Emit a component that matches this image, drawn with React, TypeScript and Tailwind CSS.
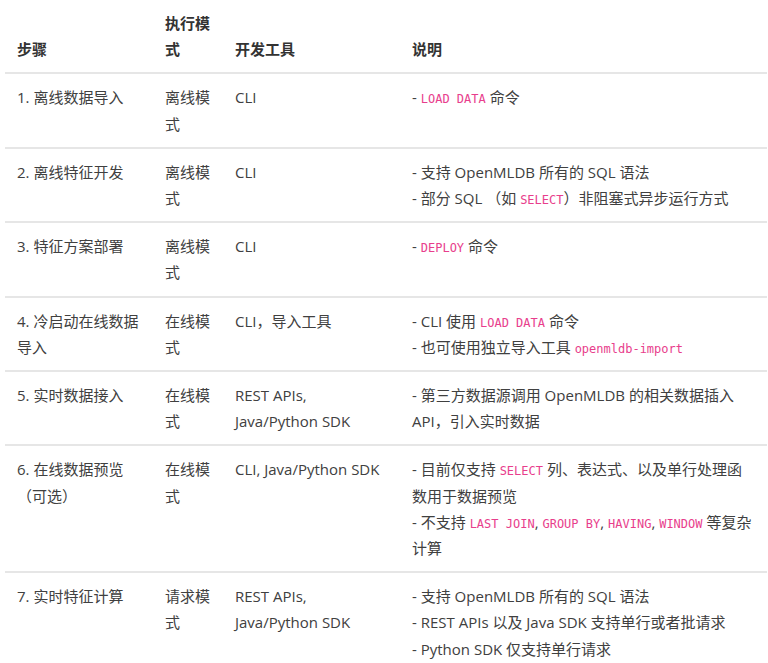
import React from "react";

const Code: React.FC<{ children: React.ReactNode }> = ({ children }) => (
  <code className="text-[12px] leading-none text-[#e83e8c] [font-family:'DejaVu_Sans_Mono',monospace]">
    {children}
  </code>
);

interface Row {
  step: React.ReactNode;
  mode: string;
  tool: React.ReactNode;
  notes: React.ReactNode[];
}

const rows: Row[] = [
  {
    step: "1. 离线数据导入",
    mode: "离线模式",
    tool: "CLI",
    notes: [<>- <Code>LOAD DATA</Code> 命令</>],
  },
  {
    step: "2. 离线特征开发",
    mode: "离线模式",
    tool: "CLI",
    notes: [
      "- 支持 OpenMLDB 所有的 SQL 语法",
      <>- 部分 SQL （如 <Code>SELECT</Code>）非阻塞式异步运行方式</>,
    ],
  },
  {
    step: "3. 特征方案部署",
    mode: "离线模式",
    tool: "CLI",
    notes: [<>- <Code>DEPLOY</Code> 命令</>],
  },
  {
    step: "4. 冷启动在线数据导入",
    mode: "在线模式",
    tool: "CLI，导入工具",
    notes: [
      <>- CLI 使用 <Code>LOAD DATA</Code> 命令</>,
      <>- 也可使用独立导入工具 <Code>openmldb-import</Code></>,
    ],
  },
  {
    step: "5. 实时数据接入",
    mode: "在线模式",
    tool: "REST APIs, Java/Python SDK",
    notes: ["- 第三方数据源调用 OpenMLDB 的相关数据插入 API，引入实时数据"],
  },
  {
    step: "6. 在线数据预览（可选）",
    mode: "在线模式",
    tool: "CLI, Java/Python SDK",
    notes: [
      <>- 目前仅支持 <Code>SELECT</Code> 列、表达式、以及单行处理函数用于数据预览</>,
      <>
        - 不支持 <Code>LAST JOIN</Code>, <Code>GROUP BY</Code>, <Code>HAVING</Code>,{" "}
        <Code>WINDOW</Code> 等复杂计算
      </>,
    ],
  },
  {
    step: "7. 实时特征计算",
    mode: "请求模式",
    tool: "REST APIs, Java/Python SDK",
    notes: [
      "- 支持 OpenMLDB 所有的 SQL 语法",
      "- REST APIs 以及 Java SDK 支持单行或者批请求",
      "- Python SDK 仅支持单行请求",
    ],
  },
];

export default function App() {
  return (
    <div className="w-[768px] h-[663px] overflow-hidden bg-white pl-[5px]">
      <table className="table-fixed w-[762px] border-collapse text-[15px] leading-[26.2px] text-[#404040] [font-family:'Open_Sans','Noto_Sans_CJK_SC',sans-serif]">
        <colgroup>
          <col className="w-[148px]" />
          <col className="w-[70px]" />
          <col className="w-[177px]" />
          <col className="w-[367px]" />
        </colgroup>
        <thead>
          <tr className="border-b-2 border-[#e6e6e6] align-bottom text-[#333] font-bold">
            <th className="px-3 py-[10px] text-left">步骤</th>
            <th className="px-3 py-[10px] text-left">执行模式</th>
            <th className="px-3 py-[10px] text-left">开发工具</th>
            <th className="px-3 py-[10px] text-left">说明</th>
          </tr>
        </thead>
        <tbody>
          {rows.map((row, i) => (
            <tr key={i} className="border-b-2 border-[#e6e6e6] align-top">
              <td className="px-3 py-[10px]">{row.step}</td>
              <td className="px-3 py-[10px]">{row.mode}</td>
              <td className="px-3 py-[10px]">{row.tool}</td>
              <td className="px-3 py-[10px]">
                {row.notes.map((n, j) => (
                  <div key={j}>{n}</div>
                ))}
              </td>
            </tr>
          ))}
        </tbody>
      </table>
    </div>
  );
}
